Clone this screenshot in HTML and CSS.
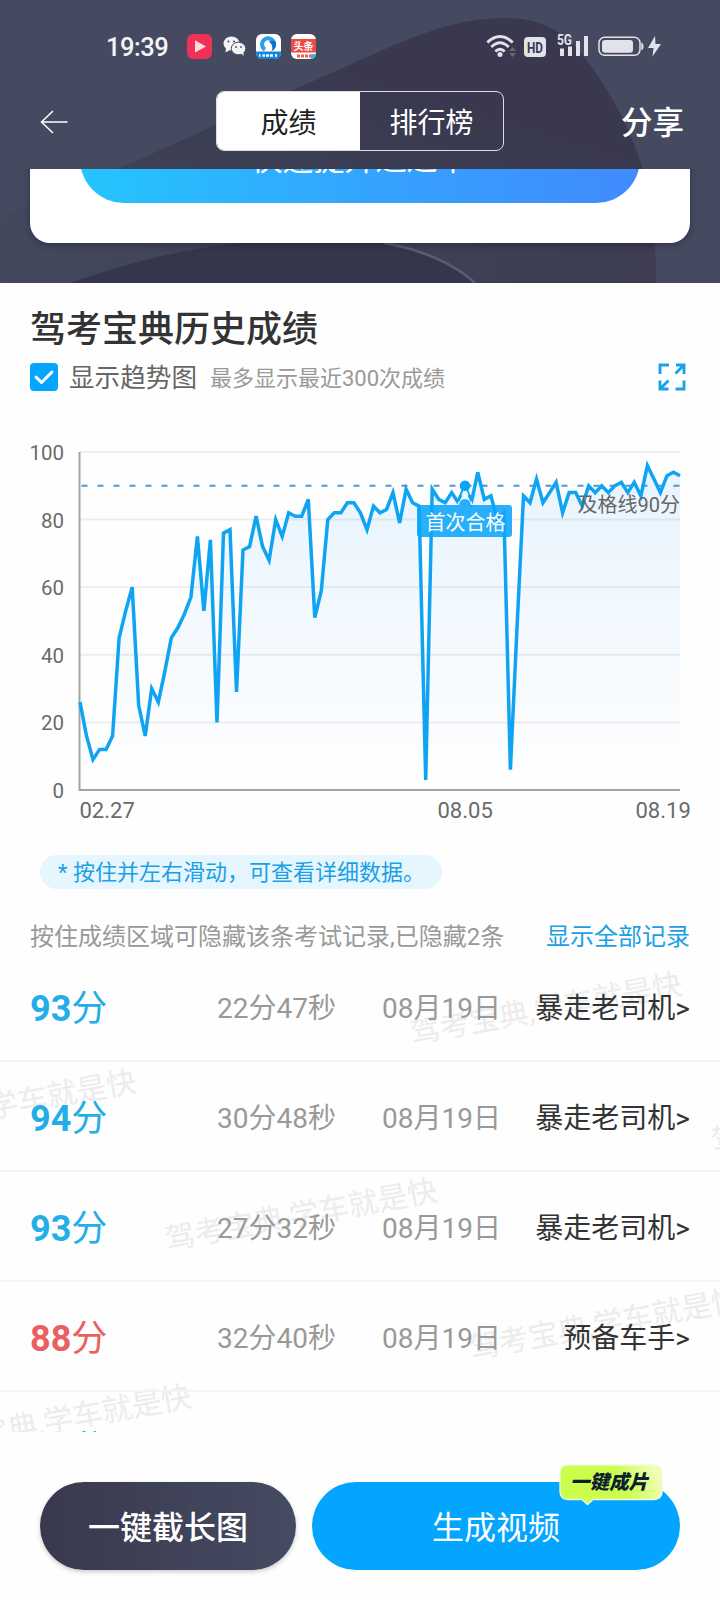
FILE: index.html
```html
<!DOCTYPE html>
<html lang="zh-CN">
<head>
<meta charset="utf-8">
<title>成绩</title>
<link rel="stylesheet" href="styles.css">
</head>
<body>
<div class="screen">
  <header class="hero">
    <svg class="hero-bg" viewBox="0 0 720 283">
      <defs>
        <linearGradient id="blob" x1="0.2" y1="0.9" x2="0.65" y2="0.3">
          <stop offset="0" stop-color="#43485d"/><stop offset="0.5" stop-color="#3c3f54"/><stop offset="1" stop-color="#39384f"/>
        </linearGradient>
        <linearGradient id="lower" x1="0" y1="0" x2="1" y2="0">
          <stop offset="0" stop-color="#43485d"/><stop offset=".6" stop-color="#3e4156"/><stop offset="1" stop-color="#3d3c50"/>
        </linearGradient>
      </defs>
      <path fill="url(#blob)" d="M0 218L138 160L300 87C390 48 440 18 505 18C548 18 566 36 584 57C612 93 628 126 640 160C652 196 656 240 656 283H0Z"/>
      <path fill="url(#lower)" d="M0 240H654Q656 260 656 283H0Z"/>
      <path fill="#35364c" d="M70 283C130 262 190 247 244 243H384C425 250 458 267 476 283Z"/>
      <path fill="none" stroke="#5a5b72" stroke-width="2.600" d="M384 243C425 250 457 266 475 283"/>
    </svg>
    <div class="statusbar">
      <span class="clock">19:39</span>
      <div class="apps">
        <svg width="25" height="25" viewBox="0 0 25 25"><rect width="25" height="25" rx="6" fill="#ef3158"/><path d="M8 6.3L19 12.5L8 18.5Z" fill="#ffd9df"/></svg>
        <svg width="25" height="25" viewBox="0 0 25 25"><ellipse cx="9.500" cy="9.500" rx="8" ry="7" fill="#f4f4f6"/><path d="M4 14L3.500 18.500L8 16Z" fill="#f4f4f6"/><circle cx="6.500" cy="7.500" r="1" fill="#464a61"/><circle cx="12" cy="7.500" r="1" fill="#464a61"/><ellipse cx="16.500" cy="14.500" rx="7.300" ry="6.300" fill="#f4f4f6" stroke="#464a61" stroke-width="1"/><path d="M19 19L21.500 22L21.500 18Z" fill="#f4f4f6"/><circle cx="14" cy="13" r=".9" fill="#464a61"/><circle cx="19" cy="13" r=".9" fill="#464a61"/></svg>
        <svg width="25" height="25" viewBox="0 0 25 25"><rect width="25" height="25" rx="6" fill="#fff"/><path d="M0 17.500H25V19Q25 25 19 25H6Q0 25 0 19Z" fill="#1484dc"/><path d="M9 15.500A6 6 0 1 1 18 9.500" fill="none" stroke="#2aa0ee" stroke-width="4"/><path d="M13 7.500Q17 6 20 8V12Q19 16 15.500 17Q18 12 13 7.500Z" fill="#146fd5"/><path d="M3 21.500H4.500M6.500 21.500H9M10 21.500H13M14 21.500H17M19 21.500H21" stroke="#fff" stroke-width="2.500"/></svg>
        <svg width="25" height="25" viewBox="0 0 25 25"><rect width="25" height="25" rx="6" fill="#fff"/><path d="M0 5H25V18.500H0Z" fill="#ee4a48"/><text class="toutiao" x="12.500" y="16" text-anchor="middle">头条</text><path d="M6 22H20" stroke="#e86058" stroke-width="3" stroke-dasharray="3 1"/><path d="M20 25V20H25Q25 25 20 25" fill="#3db9c5"/></svg>
      </div>
      <div class="signals">
        <svg width="30" height="25" viewBox="0 0 30 25"><g fill="none" stroke="#e2e2ea" stroke-width="3"><path d="M1.300 8.500Q14 -3.500 26.700 8.500"/><path d="M5.300 13Q14 4.500 22.700 13"/><path d="M9.300 17.500Q14 13 18.700 17.500"/></g><circle cx="14" cy="20.500" r="2.500" fill="#e2e2ea"/><path d="M23 17L26.500 13L30 17ZM23 19L26.500 23L30 19Z" fill="#696779"/></svg>
        <svg class="sig-hd" width="22" height="20" viewBox="0 0 22 20"><rect width="22" height="20" rx="4" fill="#e2e2ea"/><text class="hd" x="11" y="15.500" text-anchor="middle" textLength="16" lengthAdjust="spacingAndGlyphs">HD</text></svg>
        <svg class="sig-cell" width="32" height="23" viewBox="0 0 32 23"><text class="g5" x="0" y="11" textLength="15" lengthAdjust="spacingAndGlyphs">5G</text><path fill="#e2e2ea" d="M3 14.500H7V22H3ZM11 12.500H15V22H11ZM19 7H23V22H19ZM27 2H31V22H27Z"/></svg>
        <svg class="sig-bat" width="64" height="21" viewBox="0 0 64 21"><rect x="1" y="1.300" width="41" height="18" rx="5.500" fill="none" stroke="#e2e2ea" stroke-width="1.500"/><rect x="4" y="4" width="31" height="12.800" rx="3" fill="#e2e2ea"/><path d="M43.300 6.500Q45.500 7 45.500 10.500T43.300 14Z" fill="#e2e2ea"/><path d="M57 0L50 12H55.500L54.500 20.500L63 8H57.500Z" fill="#e2e2ea"/></svg>
      </div>
    </div>
    <nav class="nav">
      <svg class="back" width="28" height="24" viewBox="0 0 28 24"><path d="M13 1L1.500 12L13 23M1.500 12H27.500" fill="none" stroke="#fff" stroke-width="1.500"/></svg>
      <div class="tabs"><span class="tab tab-on">成绩</span><span class="tab">排行榜</span></div>
      <span class="share">分享</span>
    </nav>
    <div class="promo-clip">
      <div class="promo"><div class="promo-btn">快速提升通过率</div></div>
    </div>
  </header>

  <main class="content">
    <h1 class="title">驾考宝典历史成绩</h1>
    <div class="options">
      <svg width="28" height="28" viewBox="0 0 28 28"><rect width="28" height="28" rx="4" fill="#04a5ff"/><path d="M6 14L11.500 19.500L22 9" fill="none" stroke="#fff" stroke-width="3" stroke-linecap="round" stroke-linejoin="round"/></svg>
      <span class="opt-label">显示趋势图</span>
      <span class="opt-note">最多显示最近300次成绩</span>
      <svg class="expand" width="28" height="28" viewBox="0 0 28 28"><path d="M2 11V2H11M18 2H26V11M26 2L17.500 10.500M2 17.500V26H10.500M2 26L10.500 17.500M26 17.500V26H17.500" fill="none" stroke="#1ba0ea" stroke-width="2.900"/></svg>
    </div>
    <svg class="chart" width="720" height="410" viewBox="0 430 720 410">
      <defs>
        <linearGradient id="area" gradientUnits="userSpaceOnUse" x1="0" y1="465" x2="0" y2="770">
          <stop offset="0" stop-color="#1a98ff" stop-opacity=".1"/><stop offset="1" stop-color="#1a98ff" stop-opacity="0"/>
        </linearGradient>
      </defs>
      <path d="M80 452H680M80 519.600H680M80 587.200H680M80 654.800H680M80 722.400H680" stroke="#ededef" stroke-width="2"/>
      <path id="fill" fill="url(#area)"/>
      <path d="M79.500 452V790H680" fill="none" stroke="#a3a3a3" stroke-width="2"/>
      <path d="M81.500 485.800H680" stroke="#4d96ce" stroke-width="2" stroke-dasharray="6 10"/>
      <path id="line" fill="none" stroke="#0fa4f3" stroke-width="3.500" stroke-linejoin="miter" stroke-miterlimit="4"/>
      <path d="M465 487L457 505H473Z" fill="#e8f7ff"/>
      <path d="M461 495L458 501M469 495L472 501" stroke="#12a2f0" stroke-width="3"/>
      <circle cx="465" cy="485.800" r="5.300" fill="#08a5fb"/>
      <path d="M459 505Q460 499 465 499T471 505Z" fill="#27aefc"/>
      <rect x="417" y="505" width="95" height="32" rx="3" fill="#0ba5fb" fill-opacity=".88"/>
      <text class="mark" x="465.500" y="530" text-anchor="middle">首次合格</text>
      <text class="passline" x="680" y="511.500" text-anchor="end">及格线90分</text>
      <g class="ylab" text-anchor="end">
        <text x="64" y="460">100</text><text x="64" y="527.500">80</text><text x="64" y="595">60</text><text x="64" y="662.700">40</text><text x="64" y="730.200">20</text><text x="64" y="798">0</text>
      </g>
      <g class="xlab"><text x="79.500" y="817.500">02.27</text><text x="437.500" y="817.500">08.05</text><text x="635.500" y="817.500">08.19</text></g>
    </svg>
    <div class="tip">* 按住并左右滑动，可查看详细数据。</div>
    <div class="hint"><span>按住成绩区域可隐藏该条考试记录,已隐藏2条</span><a class="show-all">显示全部记录</a></div>
    <section class="records">
      <svg class="watermarks" width="720" height="481" viewBox="0 951 720 481">
        <g text-anchor="middle">
          <text transform="translate(548 1019) rotate(-10.400)">驾考宝典,学车就是快</text>
          <text transform="translate(2 1116) rotate(-10.400)">驾考宝典,学车就是快</text>
          <text transform="translate(849 1127) rotate(-10.400)">驾考宝典,学车就是快</text>
          <text transform="translate(303 1225) rotate(-10.400)">驾考宝典,学车就是快</text>
          <text transform="translate(607 1334) rotate(-10.400)">驾考宝典,学车就是快</text>
          <text transform="translate(57 1431) rotate(-10.400)">驾考宝典,学车就是快</text>
        </g>
      </svg>
      <div class="row"><span class="score"><b>93</b>分</span><span class="time">22分47秒</span><span class="date">08月19日</span><span class="rank">暴走老司机&gt;</span></div>
      <div class="row"><span class="score"><b>94</b>分</span><span class="time">30分48秒</span><span class="date">08月19日</span><span class="rank">暴走老司机&gt;</span></div>
      <div class="row"><span class="score"><b>93</b>分</span><span class="time">27分32秒</span><span class="date">08月19日</span><span class="rank">暴走老司机&gt;</span></div>
      <div class="row"><span class="score fail"><b>88</b>分</span><span class="time">32分40秒</span><span class="date">08月19日</span><span class="rank">预备车手&gt;</span></div>
      <div class="row"><span class="score"><b>93</b>分</span></div>
    </section>
  </main>

  <footer class="actions">
    <button class="btn btn-dark">一键截长图</button>
    <button class="btn btn-blue">生成视频
      <span class="badge">
        <svg width="106" height="42" viewBox="0 0 106 42"><defs><linearGradient id="lime" x1="0" y1=".6" x2="1" y2=".4"><stop offset=".6" stop-color="#cbfd4d"/><stop offset="1" stop-color="#f2fdba"/></linearGradient></defs><path d="M9 1H95Q103 1 103 9V25Q104 35 95 35.500H34L28.500 40.500L23 35.500H9Q1 35.500 1 27V9Q1 1 9 1Z" fill="url(#lime)" stroke="#effbdc" stroke-width="1.300"/></svg>
        <span class="badge-text">一键成片</span>
      </span>
    </button>
  </footer>
</div>
<script src="chart.js"></script>
</body>
</html>
```

FILE: styles.css
```css
* { box-sizing: border-box; }
body {
  margin: 0;
  background: #fefefe;
  font-family: Roboto, "Noto Sans CJK SC", sans-serif;
  color: #333;
}
.screen {
  width: 720px;
  height: 1600px;
  display: flex;
  flex-direction: column;
  overflow: hidden;
}
.hero {
  position: relative;
  height: 283px;
  background: #464a61;
  flex: none;
}
.hero-bg { position: absolute; left: 0; top: 0; width: 720px; height: 283px; }
.statusbar {
  position: relative;
  height: 91px;
  padding: 34px 61px 0 106px;
  display: flex;
  align-items: flex-start;
}
.clock { font-size: 25.500px; line-height: 26px; font-weight: 500; color: #f4f4f6; width: 81px; letter-spacing: -0.5px; }
.apps { display: flex; gap: 9.7px; }
.apps svg { display: block; flex: none; }
.toutiao { font-size: 10px; font-weight: 700; fill: #fff; }
.signals { display: flex; margin-left: auto; align-items: flex-start; }
.sig-hd { margin: 3px 0 0 8px; }
.sig-cell { margin: 0 0 0 11px; overflow: visible; }
.sig-bat { margin: 2px -3px 0 9px; }
.hd { font-size: 15px; font-weight: 700; fill: #3a3950; }
.g5 { font-size: 14px; font-weight: 700; fill: #e2e2ea; }
.nav {
  position: relative;
  height: 78px;
  padding: 0 36px 0 40px;
  display: flex;
  align-items: flex-start;
}
.back { margin-top: 18.500px; }
.tabs {
  display: flex;
  width: 288px;
  height: 60px;
  margin-left: 148px;
  border: 1.500px solid #dcdce3;
  border-radius: 8px;
  overflow: hidden;
}
.tab { flex: 1; text-align: center; font-size: 28px; line-height: 63px; color: #fff; }
.tab-on { background: #fff; color: #222; border-radius: 6px 0 0 6px; }
.share { margin-left: auto; color: #fff; font-size: 31.500px; line-height: 65px; font-weight: 500; }
.promo-clip { position: relative; height: 114px; overflow: hidden; display: flex; align-items: flex-start; justify-content: center; }
.promo {
  width: 660px;
  height: 154px;
  margin-top: -80px;
  flex: none;
  background: #fff;
  border-radius: 20px;
  box-shadow: 0 2px 6px rgba(20,20,35,.4);
  display: flex;
  justify-content: center;
  align-items: flex-start;
}
.promo-btn {
  width: 560px;
  height: 88px;
  margin-top: 25.500px;
  border-radius: 44px;
  background: linear-gradient(90deg, #25c5fe, #36a0fe 58%, #418afd);
  color: #fff;
  font-size: 31px;
  line-height: 89px;
  text-align: center;
}
.content { flex: none; height: 1149px; display: flex; flex-direction: column; }
.title { margin: 21px 0 0 30px; font-size: 36px; line-height: 52px; font-weight: 500; color: #333; }
.options { height: 42px; padding: 0 34px 0 30px; display: flex; align-items: center; }
.opt-label { margin: -4px 0 0 11px; font-size: 25.600px; color: #666; }
.opt-note { margin: -3px 0 0 13px; font-size: 22px; color: #999; }
.expand { margin-left: auto; }
.chart { display: block; margin-top: 32px; flex: none; }
.ylab { font-size: 20.500px; fill: #6a6a6a; }
.xlab { font-size: 22px; fill: #6a6a6a; }
.mark { font-size: 20px; fill: #fff; }
.passline { font-size: 20px; fill: #666; }
.tip {
  margin: 15px 0 0 40px;
  width: 402px;
  height: 34px;
  padding-left: 18px;
  border-radius: 17px;
  background: #e5f6ff;
  color: #1b9fe6;
  font-size: 22px;
  line-height: 35px;
  white-space: nowrap;
}
.hint { height: 62px; padding: 0 30px 4px; margin-top: 16px; display: flex; justify-content: space-between; align-items: center; font-size: 24px; color: #999; }
.show-all { color: #1b9fe6; }
.records { position: relative; height: 465px; overflow: hidden; }
.watermarks { position: absolute; left: 0; bottom: 0; font-size: 30px; font-weight: 400; fill: #ececec; }
.row {
  position: relative;
  height: 110px;
  padding: 0 30px;
  display: grid;
  grid-template-columns: 187px 165px 1fr auto;
  align-items: center;
  border-bottom: 2px solid #f3f3f4;
}
.row:first-of-type { margin-top: -15px; }
.score { font-size: 36px; line-height: 50px; margin-top: 6px; color: #22aee6; }
.score b { font-size: 36px; font-weight: 700; }
.fail { color: #ea6060; }
.time, .date { font-size: 28px; color: #999; }
.rank { font-size: 28px; color: #333; }
.actions { position: relative; padding: 50px 40px 0; display: flex; gap: 16px; height: 168px; }
.btn {
  height: 88px;
  border: 0;
  padding: 4px 0 0;
  border-radius: 44px;
  color: #fff;
  font-family: inherit;
  font-size: 32px;
  line-height: 84px;
}
.btn-dark { width: 256px; font-weight: 500; background: linear-gradient(90deg, #39384e, #454b61); box-shadow: 0 2px 4px rgba(50,50,70,.25); }
.btn-blue { position: relative; width: 368px; background: #04a5ff; }
.badge { position: absolute; left: 247px; top: -18px; width: 106px; height: 42px; line-height: 0; }
.badge svg { position: absolute; left: 0; top: 0; }
.badge-text { position: absolute; left: 11px; top: 1px; font-size: 19.600px; line-height: 35px; font-weight: 900; font-style: italic; color: #0d1e2c; white-space: nowrap; }
```

FILE: chart.js
```js
const scores = [26,16,9,12,12,16,45,53,60,25,16,30,26,35,45,48,52,57,75,53,74,20,76,77,29,
  71,72,81,72,68,80,75,82,81,81,86,51,59,80,82,82,85,85,82,77,84,82,83,88,79,89,85,84,3,
  89,86,85,88,85,90,85,94,86,87,80,82,6,48,87,85,92,85,88,91,82,88,88,84,90,88,90,88,90,
  91,88,91,87,96,92,88,93,94,93];
const step = 600 / (scores.length - 1);
const points = scores.map((s, i) => (80 + i * step).toFixed(1) + ' ' + (790 - s * 3.38).toFixed(1));
const line = 'M' + points.join('L');
document.getElementById('line').setAttribute('d', line);
document.getElementById('fill').setAttribute('d', line + 'L680 790L80 790Z');
```
